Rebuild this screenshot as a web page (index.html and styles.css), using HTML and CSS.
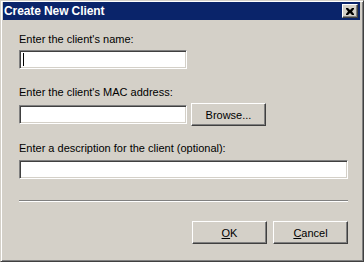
FILE: index.html
```html
<!DOCTYPE html>
<html lang="en">
<head>
    <meta charset="UTF-8">
    <title>Create New Client</title>
    <link rel="stylesheet" href="styles.css">
</head>
<body>
    <div class="window">
        <div class="titlebar">
            <span class="title">Create New Client</span>
            <div class="close-btn">
                <svg width="8" height="7" viewBox="0 0 8 7">
                    <path d="M0 0h2l2 2 2-2h2v1l-2 2.5 2 2.5v1h-2l-2-2-2 2h-2v-1l2-2.5-2-2.5z" fill="#000"/>
                </svg>
            </div>
        </div>

        <div class="content">
            <div class="label">Enter the client's name:</div>
            <div class="field short"><span class="caret"></span></div>

            <div class="label second">Enter the client's MAC address:</div>
            <div class="row">
                <div class="field short"></div>
                <div class="button browse">Browse...</div>
            </div>

            <div class="label third">Enter a description for the client (optional):</div>
            <div class="field"></div>

            <div class="separator"></div>

            <div class="actions">
                <div class="button"><u>O</u>K</div>
                <div class="button"><u>C</u>ancel</div>
            </div>
        </div>
    </div>
</body>
</html>
```

FILE: styles.css
```css
html, body {
    margin: 0;
    padding: 0;
}
body {
    width: 364px;
    height: 262px;
    font-family: "Liberation Sans", Arial, sans-serif;
    font-size: 11px;
    color: #000;
    background: #d4d0c8;
}
.window {
    box-sizing: border-box;
    width: 364px;
    height: 262px;
    background: #d4d0c8;
    border-top: 1px solid #d4d0c8;
    border-left: 1px solid #d4d0c8;
    border-right: 1px solid #404040;
    border-bottom: 1px solid #404040;
    box-shadow: inset 1px 1px 0 #fff, inset -1px -1px 0 #808080;
    padding: 1px 3px 3px 2px;
}
.titlebar {
    height: 18px;
    background: #0a246a;
    display: flex;
    align-items: center;
    justify-content: space-between;
    padding: 0 2px 0 1px;
}
.title {
    color: #fff;
    font-weight: bold;
    font-size: 12px;
    letter-spacing: -0.1px;
}
.close-btn {
    box-sizing: border-box;
    width: 16px;
    height: 14px;
    background: #d4d0c8;
    border-top: 1px solid #fff;
    border-left: 1px solid #fff;
    border-right: 1px solid #404040;
    border-bottom: 1px solid #404040;
    box-shadow: inset -1px -1px 0 #808080;
    display: flex;
    align-items: center;
    justify-content: center;
}
.content {
    padding: 13px 12px 0 16px;
}
.label {
    height: 13px;
    line-height: 13px;
    margin-bottom: 4px;
}
.label.second {
    margin-top: 17px;
}
.label.third {
    margin-top: 16px;
    margin-bottom: 5px;
}
.field {
    box-sizing: border-box;
    height: 19px;
    width: 329px;
    background: #fff;
    border-top: 1px solid #808080;
    border-left: 1px solid #808080;
    border-right: 1px solid #fff;
    border-bottom: 1px solid #fff;
    box-shadow: inset 1px 1px 0 #404040, inset -1px -1px 0 #d4d0c8;
    padding: 2px 3px;
}
.field.short {
    width: 168px;
}
.caret {
    display: block;
    width: 1px;
    height: 13px;
    background: #000;
}
.row {
    display: flex;
    align-items: center;
    gap: 4px;
}
.button {
    box-sizing: border-box;
    width: 75px;
    height: 23px;
    background: #d4d0c8;
    border-top: 1px solid #fff;
    border-left: 1px solid #fff;
    border-right: 1px solid #404040;
    border-bottom: 1px solid #404040;
    box-shadow: inset -1px -1px 0 #808080;
    display: flex;
    align-items: center;
    justify-content: center;
    font-size: 11px;
}
.separator {
    width: 329px;
    height: 1px;
    background: #808080;
    border-bottom: 1px solid #fff;
    margin-top: 21px;
}
.actions {
    display: flex;
    justify-content: flex-end;
    gap: 6px;
    margin-top: 19px;
}
```
